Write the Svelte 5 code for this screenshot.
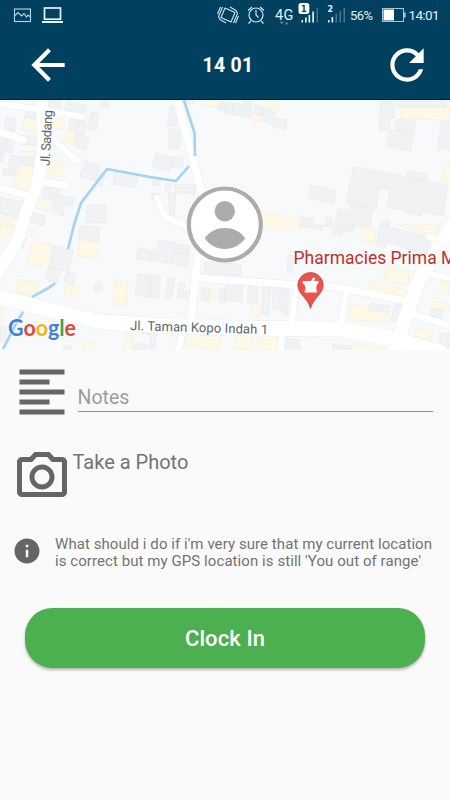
<script>
  let notes = '';

  // Roads are drawn twice: a wider casing first, then the white surface.
  const roads = [
    { d: 'M-5 103L45 110L83 117', w: 6 },
    { d: 'M42 100L43 145L38 182L25 215L19 238L-4 276', w: 12 },
    { d: 'M-2 131L23 140', w: 7 },
    { d: 'M48 135L77 161', w: 7 },
    { d: 'M40 182L66 185', w: 7 },
    { d: 'M-2 187L32 197', w: 7 },
    { d: 'M177 98L185 130L196 170L202 195L200 240L197 262L191 322', w: 8 },
    { d: 'M157 198L165 217L188 227', w: 6 },
    { d: 'M195 278L300 285L335 287L407 301', w: 7 },
    { d: 'M458 215L440 245L420 278L403 325L393 355', w: 14 },
    { d: 'M428 236L444 243', w: 6 },
    { d: 'M347 290L340 327', w: 6 },
    { d: 'M424 273L455 279', w: 6 },
    { d: 'M410 314L455 327', w: 7 },
    { d: 'M297 285L291 325', w: 6 },
    { d: 'M62 318L57 352', w: 6 },
    { d: 'M184 328L178 352', w: 6 },
    { d: 'M283 332L280 352', w: 6 },
    { d: 'M-5 296L50 310L100 322L150 325L230 328L340 329L390 338L440 352', w: 15 }
  ];

  const rivers = [
    'M184 100L194.500 133L195 156',
    'M189 166L176 181L150 177L107 169L97 182L81 203L74 225L68 249',
    'M55 283C52 287 44 290 32 297',
    'M23 312L17 322L3 349'
  ];

  // Building footprints, grouped by map tile. Each tile has its own units.
  const tiles = [
    {
      x: 0, y: 95,
      grey: [
        '78,52 120,60 118,75 75,66', '137,15 182,15 180,45 150,40', '200,20 222,22 218,50 195,45',
        '230,25 260,32 253,60 224,53', '302,20 327,24 325,40 300,36', '275,50 297,55 288,105 262,100',
        '212,68 238,72 230,108 205,103', '238,75 257,80 250,122 228,115', '230,118 268,128 255,166 225,155',
        '20,65 48,72 42,110 12,103', '65,122 118,125 115,152 65,150', '12,128 40,132 35,172 5,170',
        '0,130 22,132 14,168 0,166', '32,180 62,185 52,222 25,217', '62,183 110,190 108,213 60,208', '10,220 48,225 45,243 10,238',
        '255,198 300,212 285,257 240,243', '345,226 413,238 408,278 340,268', '300,230 315,235 305,275 288,262',
        '165,298 222,308 218,332 195,330 190,362 158,352', '0,308 70,320 55,370 0,355',
        '135,275 180,285 160,315 128,308', '85,350 137,362 130,392 85,380', '258,332 317,328 317,385 260,383',
        '0,170 15,175 8,200 0,198'
      ],
      yellow: [
        '75,65 150,85 145,120 65,103', '155,72 197,78 190,102 155,98', '200,108 228,112 220,148 190,143',
        '150,197 188,202 182,244 143,240', '60,208 105,215 92,290 40,280', '65,168 110,170 110,188 70,185',
        '118,312 155,322 150,348 110,340', '10,365 42,375 35,400 0,390'
      ]
    },
    {
      x: 150, y: 95,
      grey: [
        '62,35 85,38 78,95 52,90', '58,103 92,103 88,163 55,160', '18,175 68,188 58,230 8,217',
        '70,183 102,190 97,222 65,215', '10,250 33,250 30,272 7,270', '75,268 134,268 134,297 75,294',
        '48,265 65,268 55,290 43,286', '7,294 30,296 25,315 4,313', '55,293 75,295 75,375 60,365',
        '100,10 133,12 133,26 100,22', '210,18 230,22 225,48 204,44', '232,22 252,26 245,60 224,54',
        '255,24 275,28 267,63 247,58', '277,35 306,42 300,70 272,63', '280,17 306,20 303,40 277,34',
        '318,30 342,37 338,60 312,54', '345,42 378,55 368,90 334,78', '378,68 411,76 405,104 370,96'
      ],
      yellow: [
        '160,15 208,18 204,38 156,30', '350,15 385,20 380,45 345,38', '310,57 333,62 328,80 306,75',
        '320,350 450,372 450,400 325,400'
      ]
    },
    {
      x: 300, y: 95,
      grey: [
        '242,18 283,22 283,68 270,68 268,105 238,105', '290,10 436,10 436,35 290,35',
        '290,73 347,80 343,112 287,105', '270,105 342,117 332,168 260,153', '425,78 450,80 450,165 428,158 412,170',
        '160,215 442,270 430,362 366,350 362,363 313,352 313,346 262,337 270,285 238,278 228,343 138,325',
        '323,227 382,240 378,260 320,247', '34,272 107,287 101,326 26,310', '150,330 190,335 217,346 210,400 138,390',
        '115,342 140,346 132,400 103,392', '6,366 42,372 38,400 0,395', '80,365 96,368 92,395 74,395',
        '246,377 270,380 265,400 240,395'
      ],
      yellow: ['302,37 450,37 450,75 302,72', '434,205 450,207 450,277 422,272', '438,15 450,15 450,38 436,38']
    },
    {
      x: 0, y: 225,
      grey: [
        '240,2 298,5 296,50 234,42', '160,62 220,75 205,138 150,128', '145,128 183,135 172,172 136,163',
        '200,140 227,147 220,180 192,172', '283,175 300,168 310,182 305,200 288,200 279,188',
        '415,68 450,75 450,108 408,102', '415,145 450,152 450,218 404,208', '62,28 77,34 70,67 54,60',
        '0,300 20,310 12,350 0,348', '193,360 214,363 210,380 190,378',
        '400,355 440,358 440,380 398,378', '435,310 450,314 448,330 430,327'
      ],
      yellow: [
        '95,50 160,62 148,130 80,115', '238,45 298,55 292,100 232,92', '55,165 116,168 115,200 90,210 52,200',
        '345,165 383,170 380,243 340,240', '195,178 237,188 232,224 208,220 215,205 193,208',
        '75,8 97,17 94,34 70,25', '0,0 42,0 20,45 0,38', '255,347 285,350 280,380 250,375', '378,325 398,330 394,378 372,375', '0,250 10,255 6,290 0,290'
      ]
    },
    {
      x: 150, y: 225,
      grey: [
        '27,45 118,63 115,90 22,73', '0,75 55,85 52,115 0,103', '62,80 118,90 112,125 58,115',
        '0,150 32,155 25,220 0,215', '55,157 75,162 66,220 45,215', '88,172 105,176 100,198 120,198 118,222 82,218',
        '165,110 273,118 272,152 162,145', '155,188 180,190 178,228 153,226', '210,190 225,192 223,232 208,230',
        '228,180 278,183 276,230 224,226', '295,185 325,188 322,238 291,234', '338,183 362,188 355,270 335,267',
        '370,188 397,192 394,255 366,250', '400,190 418,193 412,276 398,272', '414,90 430,92 426,145 412,140',
        '0,320 18,324 14,375 0,370', '410,340 450,345 450,378 406,375'
      ],
      yellow: [
        '182,190 195,191 192,232 179,230', '307,238 335,242 332,272 303,268', '110,325 212,338 206,376 105,362',
        '62,320 82,323 78,345 58,342', '258,328 306,333 300,376 252,370', '325,330 387,328 382,378 320,370'
      ]
    },
    {
      x: 300, y: 225,
      grey: [
        '240,0 270,2 255,68 230,60', '100,0 133,2 125,34 96,28', '45,0 70,2 66,15 42,12', '135,0 165,0 160,22 132,18',
        '275,8 395,38 376,90 263,52', '212,235 272,242 266,262 206,254', '285,236 314,242 300,293 272,288',
        '395,250 430,254 424,280 388,272', '420,325 450,325 450,365 420,365', '130,360 156,363 155,378 126,375', '98,358 128,362 125,378 98,375'
      ],
      yellow: [
        '190,5 230,12 222,56 182,48', '258,122 332,135 324,180 250,167', '215,172 322,195 318,217 210,197',
        '152,238 210,243 202,290 145,280', '200,256 270,265 265,293 196,287', '422,168 450,172 450,206 420,200',
        '400,230 450,237 450,258 395,250', '350,310 398,322 390,345 345,335', '340,340 390,352 380,378 334,367',
        '165,360 252,368 250,378 162,378', '290,0 420,0 412,25 375,25'
      ]
    }
  ];

  const googleLetters = [
    { ch: 'G', color: '#3f7fe0' },
    { ch: 'o', color: '#dc4a3d' },
    { ch: 'o', color: '#f2b41c' },
    { ch: 'g', color: '#3f7fe0' },
    { ch: 'l', color: '#36a654' },
    { ch: 'e', color: '#dc4a3d' }
  ];
</script>

<div class="screen">
  <header>
    <svg class="status" viewBox="0 0 450 30" width="450" height="30">
      <g fill="none" stroke="#b9d8e8" stroke-width="1.100">
        <rect x="14.500" y="9" width="16" height="12.500" />
        <path d="M15 15.500L18 12.500L21.500 16L24 13.500L26.500 17L28 15L30.500 17" />
      </g>
      <g fill="none" stroke="#e4f3f8" stroke-width="1.700">
        <rect x="44.500" y="8" width="16" height="11.200" />
        <path d="M42 22H63" stroke-width="2" />
      </g>
      <g fill="none" stroke="#d3e6ee" stroke-width="1.100" stroke-linejoin="round">
        <path d="M225 8L235 12.500L231 22L221 17.500Z" />
        <path d="M222.500 7L218.500 16.500L220 19.500L226 23M220.500 7L217.500 14M233.500 23L237.500 13.500L236 10.500L230 7M235.500 23L238.500 16" />
      </g>
      <g fill="none" stroke="#d3e6ee" stroke-width="1.200">
        <circle cx="256" cy="15" r="7" />
        <path d="M256 10V15L258.500 17.500M248 10.500L252 7M260 7L264 10.500M251 21L248.500 23.500M261 21L263.500 23.500" />
      </g>
      <text x="275" y="19.500" font-size="14.500" textLength="18.500">4G</text>
      <path d="M279.500 21.500H284L281.700 24.500ZM284.500 24.500H289L286.700 21.500Z" fill="#4e8095" />
      <rect x="298.500" y="3" width="10.800" height="11" rx="2.500" fill="#fff" />
      <text class="sim dark" x="301" y="11.500">1</text>
      <g fill="#e4f3f8">
        <rect x="301.500" y="20" width="1.500" height="2.500" />
        <rect x="305" y="17.500" width="1.700" height="5" />
        <rect x="308.500" y="15" width="1.700" height="7.500" />
        <rect x="312.300" y="11.500" width="1.700" height="11" />
        <rect x="316.500" y="8" width="1.500" height="14.500" fill="#447a91" />
      </g>
      <text class="sim" x="327.500" y="11.500">2</text>
      <g fill="#447a91">
        <rect x="328" y="20" width="1.500" height="2.500" fill="#e4f3f8" />
        <rect x="331.500" y="17" width="1.700" height="5.500" fill="#e4f3f8" />
        <rect x="335.500" y="13.500" width="1.500" height="9" />
        <rect x="339.500" y="11" width="1.500" height="11.500" />
        <rect x="343.500" y="8" width="1.500" height="14.500" />
      </g>
      <text x="350" y="20" font-size="13" textLength="23">56%</text>
      <rect x="382.500" y="8.500" width="21" height="13" fill="none" stroke="#a9c6d3" />
      <rect x="383.500" y="9.500" width="10.500" height="11" fill="#fff" />
      <rect x="404" y="12.500" width="1.700" height="5" fill="#a9c6d3" />
      <text x="408.500" y="20" font-size="13.500" textLength="31">14:01</text>
    </svg>
    <div class="toolbar">
      <button class="icon-btn" aria-label="Back">
        <svg viewBox="0 0 24 24" width="50" height="50">
          <path d="M20 11H7.830l5.590-5.590L12 4l-8 8 8 8 1.410-1.410L7.830 13H20v-2z" />
        </svg>
      </button>
      <h1>14 01</h1>
      <button class="icon-btn" aria-label="Refresh">
        <svg viewBox="0 0 24 24" width="50" height="50">
          <path d="M17.650 6.350C16.200 4.900 14.210 4 12 4c-4.420 0-7.990 3.580-7.990 8s3.570 8 7.990 8c3.730 0 6.840-2.550 7.730-6h-2.080c-.82 2.330-3.040 4-5.650 4-3.310 0-6-2.690-6-6s2.690-6 6-6c1.660 0 3.140.69 4.220 1.780L13 11h7V4l-2.350 2.350z" />
        </svg>
      </button>
    </div>
  </header>

  <svg class="map" viewBox="0 100 450 250" width="450" height="250">
    <rect y="100" width="450" height="250" fill="#f7f9fb" />
    {#each tiles as tile}
      <g transform="translate({tile.x} {tile.y}) scale(0.33333)">
        {#each tile.yellow as points}
          <polygon class="shop" {points} />
        {/each}
        {#each tile.grey as points}
          <polygon class="house" {points} />
        {/each}
      </g>
    {/each}
    {#each roads as road}
      <path class="casing" d={road.d} stroke-width={road.w + 1} />
    {/each}
    {#each roads as road}
      <path class="road" d={road.d} stroke-width={road.w} />
    {/each}
    {#each rivers as d}
      <path class="river" {d} />
    {/each}

    <text class="street" transform="translate(49.500 166) rotate(-87)" textLength="56">Jl. Sadang</text>
    <text class="street" transform="translate(130 330) rotate(1.700)" textLength="138">Jl. Taman Kopo Indah 1</text>
    <text class="place" x="293.500" y="264">Pharmacies Prima M</text>

    <path d="M310.500 308.500C308 298 297.800 294 297.800 285.200a12.700 12.700 0 0 1 25.400 0C323.200 294 313 298 310.500 308.500Z" fill="#e8554e" stroke="#c9433c" stroke-width="0.800" />
    <path d="M302.800 281H311L313.200 277.300L315.300 278.500L314 281H318.300V284H317L316.200 288L317 292.500H304.500L305.500 288L304.200 284H302.800Z" fill="#fff" />

    <circle cx="224.800" cy="224.500" r="36" fill="#fff" stroke="#acacac" stroke-width="4.200" />
    <circle cx="224.800" cy="211.200" r="10.200" fill="#acacac" />
    <path d="M204.600 238.300C210 231 217 228 224.800 228S240 231 245.300 238.300C240 245.500 233 249 224.800 249S210 245.500 204.600 238.300Z" fill="#acacac" />

    <text class="google" x="8" y="336" textLength="68" lengthAdjust="spacingAndGlyphs">{#each googleLetters as letter}<tspan fill={letter.color}>{letter.ch}</tspan>{/each}</text>
  </svg>

  <main>
    <div class="row notes">
      <svg viewBox="0 0 24 24" width="60" height="60">
        <path d="M15 15H3v2h12v-2zm0-8H3v2h12V7zM3 13h18v-2H3v2zm0 8h18v-2H3v2zM3 3v2h18V3H3z" />
      </svg>
      <input type="text" placeholder="Notes" bind:value={notes} />
    </div>

    <div class="row photo">
      <svg viewBox="0 0 24 24" width="60" height="60">
        <path d="M14.120 4l1.830 2H20v12H4V6h4.050l1.830-2h4.240M15 2H9L7.170 4H4c-1.100 0-2 .9-2 2v12c0 1.100.9 2 2 2h16c1.100 0 2-.9 2-2V6c0-1.100-.9-2-2-2h-3.170L15 2zm-3 5c-2.760 0-5 2.240-5 5s2.240 5 5 5 5-2.240 5-5-2.240-5-5-5zm0 8c-1.650 0-3-1.350-3-3s1.350-3 3-3 3 1.350 3 3-1.350 3-3 3z" />
      </svg>
      <span>Take a Photo</span>
    </div>

    <div class="row info">
      <svg viewBox="0 0 24 24" width="30" height="30">
        <path d="M12 2C6.480 2 2 6.480 2 12s4.480 10 10 10 10-4.480 10-10S17.520 2 12 2zm1 15h-2v-6h2v6zm0-8h-2V7h2v2z" />
      </svg>
      <p>What should i do if i'm very sure that my current location<br />is correct but my GPS location is still 'You out of range'</p>
    </div>

    <button class="clock-in">Clock In</button>
  </main>
</div>

<style>
  :global(body) {
    margin: 0;
    background: #fafafa;
    font-family: Roboto, sans-serif;
  }

  .screen {
    width: 450px;
    height: 800px;
    overflow: hidden;
    background: #fafafa;
  }

  svg {
    display: block;
    flex: none;
  }

  header {
    box-sizing: border-box;
    height: 100px;
    background: #01415f;
    border-bottom: 1px solid #02223d;
  }

  .status text {
    fill: #e2f0f5;
  }

  .status .sim {
    font-family: 'DejaVu Sans', sans-serif;
    font-size: 8px;
    font-weight: bold;
  }

  .status .dark {
    fill: #123f55;
  }

  .toolbar {
    display: flex;
    align-items: center;
    justify-content: space-between;
    height: 50px;
    padding: 10px 18px 0 22.5px;
  }

  .icon-btn {
    padding: 0;
    border: none;
    background: none;
    fill: #fff;
  }

  h1 {
    margin: 0;
    padding: 1px 0 0 1.5px;
    color: #fff;
    font-size: 19.5px;
    font-weight: 700;
    letter-spacing: 0.3px;
  }

  .house {
    fill: #f0f2f4;
    stroke: #e3e6e8;
    stroke-width: 1.5;
  }

  .shop {
    fill: #fef9e6;
    stroke: #f1ecd9;
    stroke-width: 1.5;
  }

  .casing,
  .road,
  .river {
    fill: none;
    stroke-linecap: round;
    stroke-linejoin: round;
  }

  .casing {
    stroke: #e9ecef;
  }

  .road {
    stroke: #fff;
  }

  .river {
    stroke: #a2d2f7;
    stroke-width: 2.6;
    stroke-linecap: butt;
  }

  .street {
    fill: #5c646c;
    font-size: 13px;
  }

  .place {
    fill: #c0302a;
    font-size: 17.5px;
  }

  .google {
    font-family: Lato, sans-serif;
    font-size: 23px;
    font-weight: 700;
    stroke: #fff;
    stroke-width: 1px;
    paint-order: stroke;
  }

  main {
    padding: 12px 17.5px 0 12px;
    fill: #656565;
    color: #737373;
  }

  .row {
    display: flex;
    align-items: flex-start;
  }

  .notes {
    height: 85px;
  }

  input {
    box-sizing: border-box;
    width: 355px;
    height: 38px;
    margin: 12px 0 0 5.5px;
    padding: 9px 0 0;
    border: none;
    border-bottom: 1px solid #8c8c8c;
    border-radius: 0;
    outline: none;
    background: none;
    font: 19.5px Roboto, sans-serif;
    color: #444;
  }

  input::placeholder {
    color: #9c9c9c;
  }

  .photo {
    height: 89px;
  }

  .photo span {
    margin: 2.5px 0 0 0.5px;
    font-size: 20px;
    line-height: 24px;
  }

  .info {
    height: 72px;
  }

  .info p {
    margin: -0.5px 0 0 13px;
    font-size: 15px;
    letter-spacing: 0.07px;
    line-height: 17.5px;
    white-space: nowrap;
  }

  .clock-in {
    display: block;
    width: 400px;
    height: 60px;
    margin-left: 13px;
    border: none;
    border-radius: 27.5px;
    background: #4caf50;
    box-shadow: 0 2px 3px rgba(0, 0, 0, 0.28);
    color: #fff;
    font: 500 22px Roboto, sans-serif;
    letter-spacing: 0.1px;
  }
</style>
